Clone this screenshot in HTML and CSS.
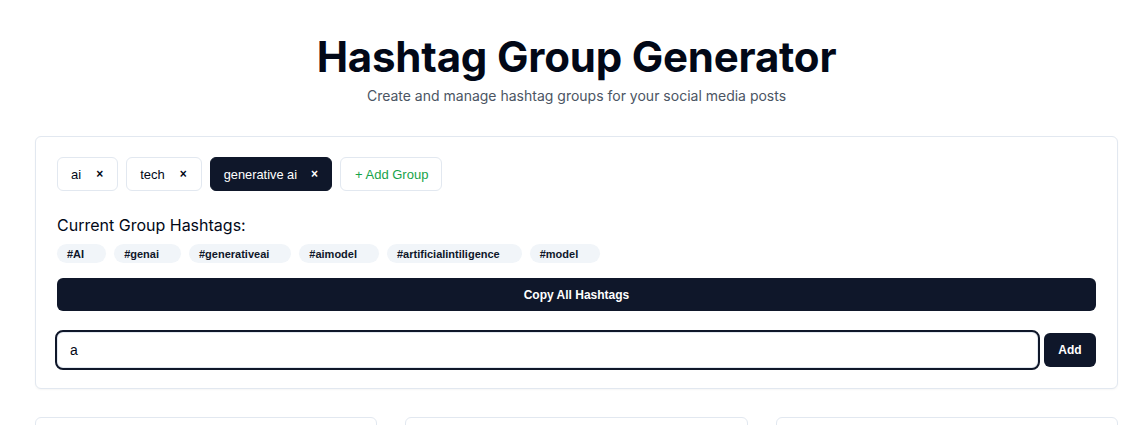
FILE: index.html
```html
<!DOCTYPE html>
<html lang="en">
<head>
<meta charset="utf-8">
<title>Hashtag Group Generator</title>
<link rel="stylesheet" href="styles.css">
</head>
<body>
<div class="page">
  <header class="header">
    <h1 class="title">Hashtag Group Generator</h1>
    <p class="subtitle">Create and manage hashtag groups for your social media posts</p>
  </header>

  <section class="card main-card">
    <div class="tabs">
      <button class="tab"><span>ai</span><span class="tab-x">×</span></button>
      <button class="tab"><span>tech</span><span class="tab-x">×</span></button>
      <button class="tab tab-active"><span>generative ai</span><span class="tab-x">×</span></button>
      <button class="tab tab-add">+ Add Group</button>
    </div>

    <h3 class="group-heading">Current Group Hashtags:</h3>
    <div class="pills">
      <span class="pill">#AI<span class="pill-x">×</span></span>
      <span class="pill">#genai<span class="pill-x">×</span></span>
      <span class="pill">#generativeai<span class="pill-x">×</span></span>
      <span class="pill">#aimodel<span class="pill-x">×</span></span>
      <span class="pill">#artificialintiligence<span class="pill-x">×</span></span>
      <span class="pill">#model<span class="pill-x">×</span></span>
    </div>

    <button class="copy-btn">Copy All Hashtags</button>

    <div class="input-row">
      <input class="tag-input is-focused" type="text" value="a">
      <button class="add-btn">Add</button>
    </div>
  </section>

  <div class="grid">
    <div class="card small-card"></div>
    <div class="card small-card"></div>
    <div class="card small-card"></div>
  </div>
</div>
</body>
</html>
```

FILE: styles.css
```css
* { box-sizing: border-box; }

html, body {
  margin: 0;
  background: #ffffff;
}

body {
  font-family: "Liberation Sans", Arial, sans-serif;
  color: #020817;
}

.page {
  width: 1083px;
  margin-left: 35px;
  padding-top: 32px;
}

.header {
  text-align: center;
}

.title {
  margin: 0;
  font-family: Inter, "Noto Sans", sans-serif;
  font-size: 42px;
  line-height: 50px;
  font-weight: 700;
  color: #020817;
  letter-spacing: -0.2px;
}

.subtitle {
  margin: 4px 0 0;
  font-family: Inter, "Noto Sans", sans-serif;
  font-size: 14px;
  line-height: 20px;
  color: #4b5563;
}

.card {
  border: 1px solid #e2e8f0;
  border-radius: 6px;
  background: #fff;
}

.main-card {
  margin-top: 30px;
  padding: 20px 21px;
  box-shadow: 0 1px 2px rgba(0, 0, 0, 0.04);
}

.tabs {
  display: flex;
  gap: 8px;
}

.tab {
  height: 34px;
  display: flex;
  align-items: center;
  gap: 15px;
  padding: 0 14px 0 13px;
  border: 1px solid #e2e8f0;
  border-radius: 6px;
  background: #fff;
  color: #020817;
  font-family: "Liberation Sans", Arial, sans-serif;
  font-size: 13px;
  cursor: pointer;
}

.tab-x {
  font-size: 12px;
  font-weight: 700;
}

.tab-active {
  background: #0f172a;
  border-color: #0f172a;
  color: #fff;
  gap: 14px;
  padding: 0 13px;
  font-size: 12.8px;
}

.tab-add {
  color: #16a34a;
  padding: 0 13px 0 14px;
}

.group-heading {
  margin: 22px 0 0;
  font-family: Inter, "Noto Sans", sans-serif;
  font-size: 16px;
  line-height: 24px;
  font-weight: 400;
  color: #020817;
}

.pills {
  display: flex;
  flex-wrap: wrap;
  gap: 8px;
  margin-top: 7px;
}

.pill {
  display: inline-flex;
  align-items: center;
  height: 19px;
  padding: 0 10px;
  border-radius: 999px;
  background: #f1f5f9;
  font-size: 11px;
  font-weight: 700;
  color: #0f172a;
}

.pill-x {
  width: 12px;
  visibility: hidden;
  text-align: right;
}

.copy-btn {
  display: block;
  width: 100%;
  height: 33px;
  margin-top: 15px;
  border: 0;
  border-radius: 6px;
  background: #0f172a;
  color: #fff;
  font-family: "Liberation Sans", Arial, sans-serif;
  font-size: 12px;
  font-weight: 700;
}

.input-row {
  display: flex;
  align-items: center;
  gap: 6px;
  margin-top: 21px;
}

.tag-input {
  flex: 1;
  height: 36px;
  padding: 0 12px;
  border: 1px solid #e2e8f0;
  border-radius: 6px;
  font-family: "Liberation Sans", Arial, sans-serif;
  font-size: 14px;
  color: #020817;
  background: #fff;
}

.tag-input.is-focused {
  outline: 2px solid #0f172a;
  outline-offset: 0;
}

.add-btn {
  width: 52px;
  height: 34px;
  border: 0;
  border-radius: 6px;
  background: #0f172a;
  color: #fff;
  font-family: "Liberation Sans", Arial, sans-serif;
  font-size: 12px;
  font-weight: 700;
}

.grid {
  display: grid;
  grid-template-columns: repeat(3, 1fr);
  gap: 28px;
  margin-top: 28px;
}

.small-card {
  height: 120px;
}
```
